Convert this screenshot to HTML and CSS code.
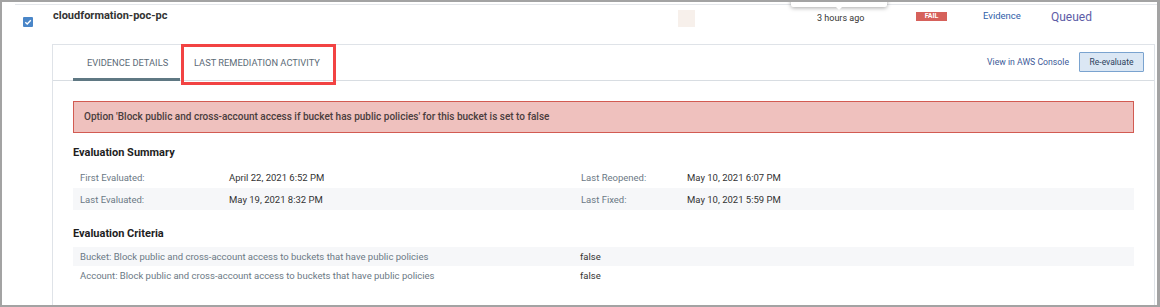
FILE: index.html
```html
<!DOCTYPE html>
<html>
<head>
<meta charset="utf-8">
<link rel="stylesheet" href="styles.css">
</head>
<body>
<div class="frame">
  <div class="tooltip"></div>
  <div class="row">
    <div class="row-main">
      <span class="checkbox"><svg width="10" height="10" viewBox="0 0 10 10"><path d="M2.3 5.2 L4.2 7 L7.8 3.2" fill="none" stroke="#fff" stroke-width="1.4"/></svg></span>
      <span class="title">cloudformation-poc-pc</span>
      <span class="swatch"></span>
      <span class="time">3 hours ago</span>
      <span class="badge">FAIL</span>
      <span class="evidence">Evidence</span>
      <span class="queued">Queued</span>
    </div>
    <div class="panel">
      <div class="tabbar">
        <div class="tab active">EVIDENCE DETAILS</div>
        <div class="tab marked">LAST REMEDIATION ACTIVITY</div>
        <div class="actions">
          <span class="console-link">View in AWS Console</span>
          <button class="btn">Re-evaluate</button>
        </div>
      </div>
      <div class="content">
        <div class="alert">Option 'Block public and cross-account access if bucket has public policies' for this bucket is set to false</div>
        <div class="heading">Evaluation Summary</div>
        <div class="summary-row">
          <span class="label">First Evaluated:</span>
          <span class="value">April 22, 2021 6:52 PM</span>
          <span class="label">Last Reopened:</span>
          <span class="value">May 10, 2021 6:07 PM</span>
        </div>
        <div class="summary-row shaded">
          <span class="label">Last Evaluated:</span>
          <span class="value">May 19, 2021 8:32 PM</span>
          <span class="label">Last Fixed:</span>
          <span class="value">May 10, 2021 5:59 PM</span>
        </div>
        <div class="heading criteria-heading">Evaluation Criteria</div>
        <div class="criteria-row shaded">
          <span class="label">Bucket: Block public and cross-account access to buckets that have public policies</span>
          <span class="value">false</span>
        </div>
        <div class="criteria-row">
          <span class="label">Account: Block public and cross-account access to buckets that have public policies</span>
          <span class="value">false</span>
        </div>
      </div>
    </div>
  </div>
</div>
</body>
</html>
```

FILE: styles.css
```css
* { box-sizing: border-box; }
html, body { margin: 0; padding: 0; background: #fff; }
body { font-family: Roboto, "Liberation Sans", sans-serif; color: #333; }

.frame {
  position: relative;
  width: 1160px;
  height: 307px;
  border-style: solid;
  border-color: #a3a3a3;
  border-width: 2px 3px 2px 2px;
  overflow: hidden;
  background: #fff;
}

.tooltip {
  position: absolute;
  left: 789px;
  top: -8px;
  width: 96px;
  height: 13px;
  background: #fff;
  border-radius: 2px;
  box-shadow: 0 1px 4px rgba(0,0,0,0.35);
}
.tooltip::after {
  content: "";
  position: absolute;
  left: 44px;
  top: 12px;
  border-left: 4px solid transparent;
  border-right: 4px solid transparent;
  border-top: 4px solid #fff;
}

.row {
  margin: 2px 0 0 13px;
  border-top: 1px solid #e4e7eb;
}

.row-main {
  height: 39px;
  display: flex;
  align-items: flex-start;
  white-space: nowrap;
}
.checkbox {
  width: 10px;
  height: 10px;
  margin: 12px 0 0 8px;
  background: #4a86c8;
  border-radius: 1px;
  display: flex;
}
.title {
  margin: 4px 0 0 20px;
  font-size: 11px;
  font-weight: 700;
  line-height: 14px;
  color: #333;
  width: 625px;
}
.swatch {
  width: 17px;
  height: 17px;
  margin-top: 5px;
  background: #f7f0eb;
}
.time {
  margin: 7px 0 0 122px;
  font-size: 9px;
  line-height: 13px;
  color: #333;
  width: 99px;
}
.badge {
  margin-top: 7px;
  width: 31px;
  height: 9px;
  background: #d6615b;
  color: #fff;
  font-size: 7px;
  font-weight: 700;
  line-height: 9px;
  text-align: center;
}
.evidence {
  margin: 4px 0 0 36px;
  font-size: 9.5px;
  line-height: 13px;
  color: #2f5ea8;
  width: 68px;
}
.queued {
  margin-top: 5px;
  font-size: 12px;
  line-height: 15px;
  color: #5d5ca6;
}

.panel {
  margin: 0 2px 0 37px;
  border: 1px solid #dfe3e8;
  border-bottom: none;
  height: 300px;
}

.tabbar {
  height: 36px;
  border-bottom: 1px solid #d8dde2;
  display: flex;
  align-items: stretch;
  padding: 0 10px 0 20px;
  white-space: nowrap;
}
.tab {
  position: relative;
  font-size: 9.3px;
  line-height: 35px;
  color: #5c6b77;
  text-transform: uppercase;
  padding: 0 0 0 14px;
}
.tab.active {
  width: 107px;
  border-bottom: 3px solid #5f7883;
  margin-bottom: -1px;
}
.tab.marked {
  width: 155px;
  margin-left: 1px;
  padding: 0 0 0 13px;
}
.tab.marked::after {
  content: "";
  position: absolute;
  left: 0;
  right: 0;
  top: -1px;
  bottom: -5px;
  border: 3px solid #f24343;
}
.actions {
  margin-left: auto;
  display: flex;
  align-items: center;
  gap: 10px;
}
.console-link {
  font-size: 8.7px;
  color: #3d5a98;
  margin-top: -2px;
}
.btn {
  width: 65px;
  height: 20px;
  margin-top: -2px;
  background: #dbe7f4;
  border: 1px solid #7aa3cf;
  border-radius: 1px;
  font-family: Roboto, "Liberation Sans", sans-serif;
  font-size: 8.5px;
  color: #2d3f5c;
  padding: 0;
}

.content {
  padding: 20px 20px 0 20px;
}
.alert {
  height: 32px;
  background: #efc1be;
  border: 1px solid #d25b52;
  padding-left: 10px;
  font-size: 10px;
  font-weight: 500;
  line-height: 30px;
  color: #4a3d3d;
}
.heading {
  margin-top: 12px;
  font-size: 11px;
  font-weight: 700;
  line-height: 16px;
  color: #1e1e1e;
}
.summary-row {
  height: 22px;
  display: grid;
  grid-template-columns: 149px 352px 106px 1fr;
  align-items: center;
  padding-left: 7px;
  font-size: 9.5px;
}
.heading + .summary-row { margin-top: 5px; }
.shaded { background: #f6f7f9; }
.label { color: #6b7985; }
.value { color: #333; }

.criteria-heading { margin-top: 16px; }
.criteria-row {
  height: 19px;
  display: grid;
  grid-template-columns: 500px 1fr;
  align-items: center;
  padding-left: 7px;
  font-size: 9.5px;
}
.heading + .criteria-row { margin-top: 5px; }
```
